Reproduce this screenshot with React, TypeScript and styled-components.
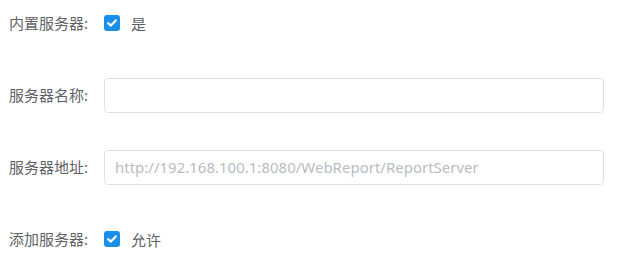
import React from 'react';
import styled, { createGlobalStyle } from 'styled-components';

const GlobalStyle = createGlobalStyle`
  html, body {
    margin: 0;
    padding: 0;
    background: #fff;
  }
  body {
    font-family: "Microsoft YaHei", "Noto Sans", "Noto Sans CJK SC", sans-serif;
    font-size: 15px;
    color: #5f6266;
  }
`;

const Form = styled.div`
  width: 604px;
  padding: 5px 0 0 9px;
  box-sizing: border-box;
  display: flex;
  flex-direction: column;
  gap: 36px;
`;

const Row = styled.div`
  display: flex;
  align-items: center;
  height: 36px;
`;

const Label = styled.label`
  width: 95px;
  flex: none;
  white-space: nowrap;
  line-height: 36px;
`;

const Input = styled.input`
  flex: 1;
  height: 35px;
  box-sizing: border-box;
  border: 1px solid #dcdfe6;
  border-radius: 4px;
  padding: 0 10px;
  font: inherit;
  font-size: 15px;
  color: #606266;
  outline: none;

  &::placeholder {
    color: #b9bcc2;
  }
`;

const CheckWrap = styled.span`
  display: inline-flex;
  align-items: center;
  gap: 11px;
`;

const Box = styled.span`
  width: 16px;
  height: 16px;
  border-radius: 3px;
  background: #1a8fe8;
  display: inline-flex;
  align-items: center;
  justify-content: center;
`;

const Check: React.FC<{ text: string }> = ({ text }) => (
  <CheckWrap>
    <Box>
      <svg width="12" height="12" viewBox="0 0 12 12">
        <path d="M2.2 6.2 L4.8 8.6 L9.8 3.4" fill="none" stroke="#fff" strokeWidth="2.2" strokeLinecap="round" strokeLinejoin="round" />
      </svg>
    </Box>
    <span>{text}</span>
  </CheckWrap>
);

export default function App() {
  return (
    <>
      <GlobalStyle />
      <Form>
        <Row>
          <Label>内置服务器:</Label>
          <Check text="是" />
        </Row>
        <Row>
          <Label>服务器名称:</Label>
          <Input type="text" />
        </Row>
        <Row>
          <Label>服务器地址:</Label>
          <Input type="text" placeholder="http://192.168.100.1:8080/WebReport/ReportServer" />
        </Row>
        <Row>
          <Label>添加服务器:</Label>
          <Check text="允许" />
        </Row>
      </Form>
    </>
  );
}
